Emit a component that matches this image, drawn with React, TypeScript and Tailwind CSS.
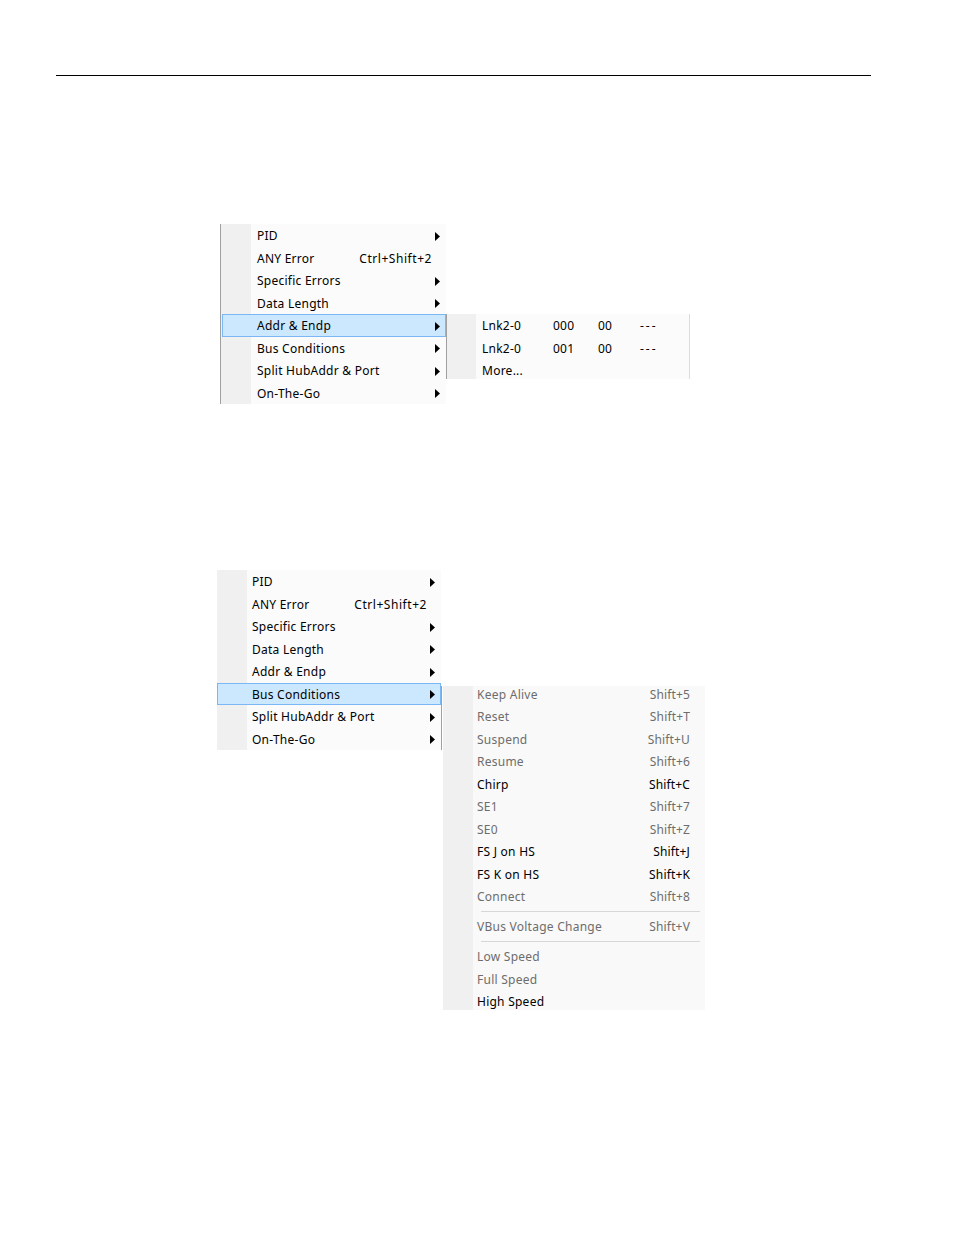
import React from 'react';

type Item = { label: string; shortcut?: string; arrow?: boolean };

const mainItems: Item[] = [
  { label: 'PID', arrow: true },
  { label: 'ANY Error', shortcut: 'Ctrl+Shift+2' },
  { label: 'Specific Errors', arrow: true },
  { label: 'Data Length', arrow: true },
  { label: 'Addr & Endp', arrow: true },
  { label: 'Bus Conditions', arrow: true },
  { label: 'Split HubAddr & Port', arrow: true },
  { label: 'On-The-Go', arrow: true },
];

type BusItem = { label: string; shortcut?: string; enabled?: boolean } | 'sep';

const busItems: BusItem[] = [
  { label: 'Keep Alive', shortcut: 'Shift+5' },
  { label: 'Reset', shortcut: 'Shift+T' },
  { label: 'Suspend', shortcut: 'Shift+U' },
  { label: 'Resume', shortcut: 'Shift+6' },
  { label: 'Chirp', shortcut: 'Shift+C', enabled: true },
  { label: 'SE1', shortcut: 'Shift+7' },
  { label: 'SE0', shortcut: 'Shift+Z' },
  { label: 'FS J on HS', shortcut: 'Shift+J', enabled: true },
  { label: 'FS K on HS', shortcut: 'Shift+K', enabled: true },
  { label: 'Connect', shortcut: 'Shift+8' },
  'sep',
  { label: 'VBus Voltage Change', shortcut: 'Shift+V' },
  'sep',
  { label: 'Low Speed' },
  { label: 'Full Speed' },
  { label: 'High Speed', enabled: true },
];

function Arrow() {
  return (
    <svg width="5" height="9" viewBox="0 0 5 9" className="shrink-0">
      <polygon points="0,0 5,4.5 0,9" fill="#000" />
    </svg>
  );
}

function MainMenu({ active, pad, bordered }: { active: string; pad: number; bordered: boolean }) {
  return (
    <div
      className={
        'flex flex-col bg-[linear-gradient(to_right,#f0f0f0_30px,#fbfbfb_30px)] ' +
        (bordered ? 'w-[226px] border-l border-[#a0a0a0]' : 'w-[224px]')
      }
    >
      {mainItems.map((it) => {
        const on = it.label === active;
        return (
          <div
            key={it.label}
            className={
              'h-[22.5px] flex items-center pt-[2px] pr-[6px] ' +
              (on ? 'bg-[#cce8ff] shadow-[inset_0_0_0_1px_#7ab8f5] ' : '') +
              (on && bordered ? 'ml-px' : '')
            }
            style={{ paddingLeft: on && bordered ? pad - 1 : pad }}
          >
            <span className="flex-1">{it.label}</span>
            {it.shortcut && <span className="mr-[8px] tracking-[0.55px]">{it.shortcut}</span>}
            {it.arrow && <Arrow />}
          </div>
        );
      })}
    </div>
  );
}

export default function App() {
  return (
    <div
      className="w-[954px] h-[1235px] bg-white text-[12px] tracking-[0.25px] text-black overflow-hidden"
      style={{ fontFamily: '"Noto Sans", "Open Sans", sans-serif' }}
    >
      <div className="pt-[75px] pl-[56px]">
        <div className="w-[815px] h-px bg-black" />
      </div>

      {/* first screenshot: Addr & Endp submenu */}
      <div className="flex items-start ml-[220px] mt-[148px]">
        <MainMenu active="Addr & Endp" pad={36} bordered />
        <div className="mt-[90px] w-[244px] h-[65px] overflow-hidden border-l border-r border-l-[#a0a0a0] border-r-[#dcdcdc] bg-[linear-gradient(to_right,#f0f0f0_29px,#fbfbfb_29px)]">
          {[
            ['Lnk2-0', '000', '00', '---'],
            ['Lnk2-0', '001', '00', '---'],
          ].map((r, i) => (
            <div key={i} className="h-[22.5px] flex items-center pt-[2px] pl-[35px]">
              <span className="w-[71px]">{r[0]}</span>
              <span className="w-[45px]">{r[1]}</span>
              <span className="w-[42px]">{r[2]}</span>
              <span className="tracking-[2px]">{r[3]}</span>
            </div>
          ))}
          <div className="h-[22.5px] flex items-center pt-[2px] pl-[35px]">More...</div>
        </div>
      </div>

      {/* second screenshot: Bus Conditions submenu */}
      <div className="flex items-start ml-[217px] mt-[166px]">
        <MainMenu active="Bus Conditions" pad={35} bordered={false} />
        <div className="mt-[116px] w-px h-[64px] bg-[#a0a0a0]" />
        <div className="mt-[116px] ml-px w-[262px] h-[324px] overflow-hidden bg-[linear-gradient(to_right,#f0f0f0_30px,#f9f9f9_30px)]">
          <div className="-mt-[3.5px]">
            {busItems.map((it, i) =>
              it === 'sep' ? (
                <div key={i} className="h-[7.5px] flex items-center pl-[38px] pr-[5px]">
                  <div className="w-full h-px bg-[#d7d7d7]" />
                </div>
              ) : (
                <div
                  key={i}
                  className={
                    'h-[22.5px] flex items-center pt-[2px] pl-[34px] pr-[15px] ' +
                    (it.enabled ? 'text-black' : 'text-[#6d6d6d]')
                  }
                >
                  <span className="flex-1">{it.label}</span>
                  {it.shortcut && <span className="tracking-[0.15px]">{it.shortcut}</span>}
                </div>
              )
            )}
          </div>
        </div>
      </div>
    </div>
  );
}
